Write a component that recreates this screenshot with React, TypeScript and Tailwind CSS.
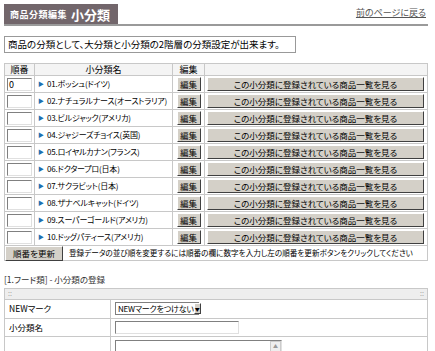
import React from "react";

const ITEMS = [
  "01.ボッシュ(ドイツ)",
  "02.ナチュラルナース(オーストラリア)",
  "03.ビルジャック(アメリカ)",
  "04.ジャジーズチョイス(英国)",
  "05.ロイヤルカナン(フランス)",
  "06.ドクタープロ(日本)",
  "07.サクラビット(日本)",
  "08.ザナベルキャット(ドイツ)",
  "09.スーパーゴールド(アメリカ)",
  "10.ドッグパティース(アメリカ)",
];

// classic windows style button face
const btn =
  "bg-[#d4d0c8] border border-t-white border-l-white border-r-[#404040] border-b-[#404040] leading-none text-black flex items-center justify-center";

const inset =
  "border border-t-[#808080] border-l-[#808080] border-r-[#e0e0e0] border-b-[#e0e0e0]";

export default function App() {
  return (
    <div className="w-[435px] h-[351px] overflow-hidden bg-white text-[9px] text-[#333] font-['Noto_Sans_CJK_JP','Liberation_Sans',sans-serif] [font-feature-settings:'palt']">
      <div className="pl-[4px] pr-[7px] pt-[4px]">
        {/* title */}
        <div className="flex items-end border-b-2 border-[#9a9a9a]">
          <div className="w-[114px] h-[20px] bg-[#72666b] flex items-center pl-[6px] gap-[4px] text-white font-bold">
            <span className="text-[9px] leading-none tracking-[0.5px]">商品分類編集</span>
            <span className="text-[13px] leading-none">小分類</span>
          </div>
          <div className="flex-1 flex justify-end pb-[7px] pr-[2px]">
            <span className="underline text-[9px] leading-none text-[#555]">前のページに戻る</span>
          </div>
        </div>

        {/* description */}
        <div className="mt-[10px] w-[292px] h-[17px] border border-[#999] pl-[3px] flex items-center text-[9.5px] leading-none text-black whitespace-nowrap">
          商品の分類として、大分類と小分類の2階層の分類設定が出来ます。
        </div>

        {/* list */}
        <div className="mt-[10px] w-[424px] border border-[#c8c8c8]">
          <div className="flex h-[11px] bg-[#f4f4f4] text-[9px] leading-none text-black">
            <div className="w-[30px] border-r border-[#c8c8c8] flex items-center justify-center">順番</div>
            <div className="w-[138px] border-r border-[#c8c8c8] flex items-center justify-center">小分類名</div>
            <div className="w-[32px] border-r border-[#c8c8c8] flex items-center justify-center">編集</div>
            <div className="flex-1" />
          </div>
          {ITEMS.map((name, i) => (
            <div key={name} className="flex h-[17px] border-t border-[#c8c8c8] text-black">
              <div className="w-[30px] border-r border-[#c8c8c8] flex items-center pl-[2px]">
                <div className={`${inset} w-[25px] h-[13px] text-[9px] leading-none pl-[1px] flex items-center`}>
                  {i === 0 ? "0" : ""}
                </div>
              </div>
              <div className="w-[138px] border-r border-[#c8c8c8] flex items-center pl-[3px] gap-[3px] text-[8px] leading-none whitespace-nowrap overflow-hidden">
                <span className="text-[#1f6fb0] text-[6px]">▶</span>
                <span className="tracking-[-0.2px]">{name}</span>
              </div>
              <div className="w-[32px] border-r border-[#c8c8c8] flex items-center justify-center">
                <div className={`${btn} w-[24px] h-[14px] text-[8.5px]`}>編集</div>
              </div>
              <div className="flex-1 flex items-center pl-[2px] pr-[3px]">
                <div className={`${btn} w-full h-[14px] text-[8.5px]`}>この小分類に登録されている商品一覧を見る</div>
              </div>
            </div>
          ))}
          <div className="flex h-[15px] border-t border-[#c8c8c8]">
            <div className={`${btn} w-[58px] h-[15px] text-[8.5px]`}>順番を更新</div>
            <div className="flex-1 flex items-center pl-[6px] text-[7.6px] leading-none text-black whitespace-nowrap overflow-hidden">
              登録データの並び順を変更するには順番の欄に数字を入力し左の順番を更新ボタンをクリックしてください
            </div>
          </div>
        </div>

        {/* register form */}
        <div className="mt-[14px] text-[8.5px] leading-none text-[#333]">[1.フード類] - 小分類の登録</div>
        <div className="mt-[4px] w-[424px] border border-[#c8c8c8]">
          <div className="h-[10px] bg-[#eeeeee] flex items-center justify-between px-[3px] text-[7px] leading-none text-[#999]">
            <span>::</span>
            <span>::</span>
          </div>
          <div className="flex h-[19px] border-t border-[#c8c8c8] text-black">
            <div className="w-[106px] border-r border-[#c8c8c8] flex items-center pl-[4px] text-[8.5px] leading-none">NEWマーク</div>
            <div className="flex-1 flex items-center pl-[4px]">
              <div className="h-[13px] w-[84px] border border-[#7f7f7f] flex items-center text-[8px] leading-none">
                <span className="flex-1 pl-[2px] whitespace-nowrap tracking-[-0.2px]">NEWマークをつけない</span>
                <span className="w-[11px] h-[11px] bg-[#d4d0c8] border border-t-white border-l-white border-r-[#404040] border-b-[#404040] flex items-center justify-center text-[5px]">▼</span>
              </div>
            </div>
          </div>
          <div className="flex h-[18px] border-t border-[#c8c8c8] text-black">
            <div className="w-[106px] border-r border-[#c8c8c8] flex items-center pl-[4px] text-[8.5px] leading-none">小分類名</div>
            <div className="flex-1 flex items-center pl-[4px]">
              <div className={`${inset} h-[13px] w-[124px]`} />
            </div>
          </div>
          <div className="flex h-[30px] border-t border-[#c8c8c8]">
            <div className="w-[106px] border-r border-[#c8c8c8]" />
            <div className="flex-1 pl-[4px] pt-[3px]">
              <div className={`${inset} h-[30px] w-[167px] flex justify-end`}>
                <span className="w-[11px] h-[11px] bg-[#eee] border border-[#ccc] text-[5px] text-[#999] flex items-center justify-center">▲</span>
              </div>
            </div>
          </div>
        </div>
      </div>
    </div>
  );
}
